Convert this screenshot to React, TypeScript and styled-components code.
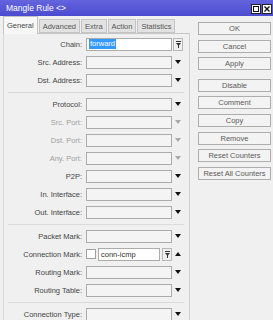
import * as React from 'react'
import styled, { createGlobalStyle } from 'styled-components'

const GlobalStyle = createGlobalStyle`
  html, body {
    margin: 0;
    padding: 0;
    background: #f0f0f0;
  }
  body {
    font-family: "Liberation Sans", Arial, sans-serif;
  }
`

const Window = styled.div`
  width: 273px;
  height: 320px;
  overflow: hidden;
  background: #f0f0f0;
  font-size: 7.5px;
  color: #404040;
`

const TitleBar = styled.div`
  height: 16px;
  display: flex;
  align-items: center;
  justify-content: space-between;
  background: linear-gradient(#6464df, #4b4bd0);
  color: #fff;
  font-size: 8.5px;
  padding-left: 6px;
  box-sizing: border-box;
`

const TitleButtons = styled.div`
  display: flex;
  gap: 1px;
  padding-right: 1px;
  align-self: flex-start;
  margin-top: 4px;
`

const TitleButton = styled.div`
  width: 10px;
  height: 10px;
  box-sizing: border-box;
  background: #fff;
  border: 1px solid #222;
  display: flex;
  align-items: center;
  justify-content: center;
`

const Body = styled.div`
  display: flex;
`

const LeftSide = styled.div`
  width: 190px;
  padding-left: 3px;
  box-sizing: border-box;
`

const Tabs = styled.div`
  display: flex;
  gap: 1px;
  height: 17px;
  align-items: flex-end;
  position: relative;
  z-index: 1;
`

const Tab = styled.div<{ $active?: boolean }>`
  height: ${(p) => (p.$active ? '18px' : '14px')};
  margin-bottom: ${(p) => (p.$active ? '-1px' : '0')};
  padding: 0 3px;
  display: flex;
  align-items: center;
  box-sizing: border-box;
  border: 1px solid #c4c4c4;
  border-bottom: ${(p) => (p.$active ? 'none' : '1px solid #c4c4c4')};
  background: ${(p) => (p.$active ? '#f7f7f7' : '#e2e2e2')};
  color: ${(p) => (p.$active ? '#484848' : '#555')};
`

const Panel = styled.div`
  border-top: 1px solid #c4c4c4;
  border-left: 1px solid #d8d8d8;
  border-right: 1px solid #d0d0d0;
  padding-top: 1px;
  height: 300px;
  box-sizing: border-box;
`

const Row = styled.div`
  display: grid;
  grid-template-columns: 82px 86px 1fr;
  align-items: center;
  height: 18px;
`

const Label = styled.div<{ $disabled?: boolean }>`
  text-align: right;
  padding-right: 4px;
  white-space: nowrap;
  color: ${(p) => (p.$disabled ? '#a0a0a0' : '#444')};
`

const Field = styled.div<{ $filled?: boolean }>`
  height: 13px;
  box-sizing: border-box;
  border: 1px solid #ababab;
  background: ${(p) => (p.$filled ? '#ffffff' : '#f4f4f4')};
  display: flex;
  align-items: center;
  padding-left: 2px;
  color: #303030;
  white-space: nowrap;
`

const Selected = styled.span`
  background: #3399ff;
  color: #fff;
  line-height: 10px;
  padding: 0 1px;
`

const FieldGroup = styled.div`
  display: flex;
  align-items: center;
  gap: 2px;
`

const Check = styled.div`
  width: 10px;
  height: 10px;
  flex: none;
  box-sizing: border-box;
  border: 1px solid #a0a0a0;
  background: #fff;
`

const SmallButton = styled.div<{ $offset?: number }>`
  width: 10px;
  height: 13px;
  flex: none;
  margin-left: ${(p) => p.$offset ?? 0}px;
  box-sizing: border-box;
  border: 1px solid #b8b8b8;
  background: #efefef;
  display: flex;
  align-items: center;
  justify-content: center;
`

const Arrow = styled.div`
  padding-left: 3px;
  display: flex;
  align-items: center;
`

const Separator = styled.div`
  height: 6px;
  display: flex;
  align-items: center;
  margin: 0 5px 0 4px;

  &::before {
    content: '';
    flex: 1;
    height: 1px;
    background: #dadada;
  }
`

const ButtonColumn = styled.div`
  padding: 6px 0 0 8px;
  display: flex;
  flex-direction: column;
  gap: 4.6px;
  width: 81px;
  box-sizing: border-box;
`

const Button = styled.div<{ $spaced?: boolean }>`
  height: 13px;
  box-sizing: border-box;
  border: 1px solid #adadad;
  background: #f3f3f3;
  color: #5a5a5a;
  display: flex;
  align-items: center;
  justify-content: center;
  white-space: nowrap;
  margin-top: ${(p) => (p.$spaced ? '4px' : '0')};
`

const Triangle = ({ up, disabled }: { up?: boolean; disabled?: boolean }) => (
  <svg width="6" height="4" viewBox="0 0 6 4">
    <polygon
      points={up ? '0,4 6,4 3,0' : '0,0 6,0 3,4'}
      fill={disabled ? '#a8a8a8' : '#111'}
    />
  </svg>
)

const ExpandIcon = () => (
  <svg width="5" height="7" viewBox="0 0 5 7">
    <rect x="0" y="0" width="5" height="1" fill="#333" />
    <polygon points="0,2 5,2 2.5,5" fill="#333" />
    <rect x="2" y="4" width="1" height="3" fill="#333" />
  </svg>
)

type FieldRow = {
  label: string
  disabled?: boolean
}

const section1: FieldRow[] = [{ label: 'Src. Address:' }, { label: 'Dst. Address:' }]

const section2: FieldRow[] = [
  { label: 'Protocol:' },
  { label: 'Src. Port:', disabled: true },
  { label: 'Dst. Port:', disabled: true },
  { label: 'Any. Port:', disabled: true },
  { label: 'P2P:' },
  { label: 'In. Interface:' },
  { label: 'Out. Interface:' },
]

const buttons = [
  'OK',
  'Cancel',
  'Apply',
  'Disable',
  'Comment',
  'Copy',
  'Remove',
  'Reset Counters',
  'Reset All Counters',
]

const tabs = ['General', 'Advanced', 'Extra', 'Action', 'Statistics']

const DropRow = ({ label, disabled }: FieldRow) => (
  <Row>
    <Label $disabled={disabled}>{label}</Label>
    <Field />
    <Arrow>
      <Triangle disabled={disabled} />
    </Arrow>
  </Row>
)

export default function App() {
  return (
    <Window>
      <GlobalStyle />
      <TitleBar>
        <span>Mangle Rule &lt;&gt;</span>
        <TitleButtons>
          <TitleButton>
            <svg width="6" height="6" viewBox="0 0 6 6">
              <rect x="0.5" y="0.5" width="5" height="5" fill="none" stroke="#111" />
            </svg>
          </TitleButton>
          <TitleButton>
            <svg width="6" height="6" viewBox="0 0 6 6">
              <path d="M0.5 0.5 L5.5 5.5 M5.5 0.5 L0.5 5.5" stroke="#111" strokeWidth="1.4" />
            </svg>
          </TitleButton>
        </TitleButtons>
      </TitleBar>
      <Body>
        <LeftSide>
          <Tabs>
            {tabs.map((t, i) => (
              <Tab key={t} $active={i === 0}>
                {t}
              </Tab>
            ))}
          </Tabs>
          <Panel>
            <Row>
              <Label>Chain:</Label>
              <Field $filled>
                <Selected>forward</Selected>
              </Field>
              <SmallButton $offset={1}>
                <ExpandIcon />
              </SmallButton>
            </Row>
            {section1.map((r) => (
              <DropRow key={r.label} {...r} />
            ))}
            <Separator />
            {section2.map((r) => (
              <DropRow key={r.label} {...r} />
            ))}
            <Separator />
            <DropRow label="Packet Mark:" />
            <Row>
              <Label>Connection Mark:</Label>
              <FieldGroup>
                <Check />
                <Field $filled style={{ flex: 1 }}>
                  conn-icmp
                </Field>
                <SmallButton>
                  <ExpandIcon />
                </SmallButton>
              </FieldGroup>
              <Arrow>
                <Triangle up />
              </Arrow>
            </Row>
            <DropRow label="Routing Mark:" />
            <DropRow label="Routing Table:" />
            <Separator />
            <DropRow label="Connection Type:" />
          </Panel>
        </LeftSide>
        <ButtonColumn>
          {buttons.map((b) => (
            <Button key={b} $spaced={b === 'Disable'}>
              {b}
            </Button>
          ))}
        </ButtonColumn>
      </Body>
    </Window>
  )
}
